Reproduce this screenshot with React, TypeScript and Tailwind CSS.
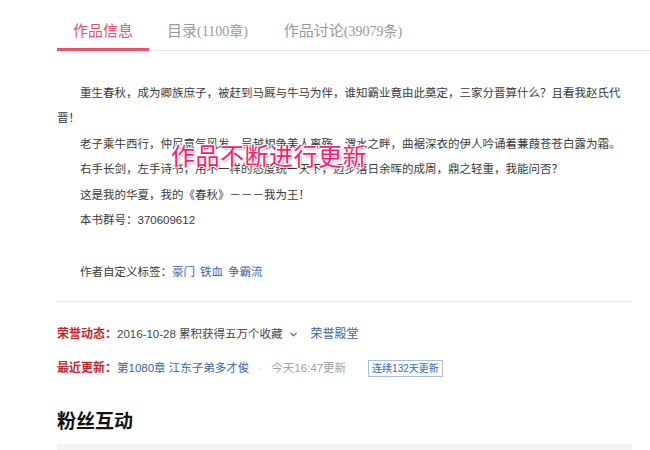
import { ChevronDown } from 'lucide-react';

const tabs = [
  { name: '作品信息', extra: '', active: true },
  { name: '目录', extra: '(1100章)', active: false },
  { name: '作品讨论', extra: '(39079条)', active: false },
];

const intro = [
  { text: '重生春秋，成为卿族庶子，被赶到马厩与牛马为伴，谁知霸业竟由此奠定，三家分晋算什么？且看我赵氏代晋！' },
  { text: '老子乘牛西行，仲尼意气风发，吴越相争美人离殇，渭水之畔，曲裾深衣的伊人吟诵着蒹葭苍苍白露为霜。' },
  { text: '右手长剑，左手诗书，用不一样的态度统一天下，迈步落日余晖的成周，鼎之轻重，我能问否？' },
  { text: '这是我的华夏，我的《春秋》－－－我为王！' },
  { text: '本书群号：370609612' },
];

const tags = ['豪门', '铁血', '争霸流'];

export default function App() {
  return (
    <main
      className="relative w-[650px] h-[450px] overflow-hidden bg-white text-[#333]"
      style={{ fontFamily: '"Liberation Sans", "Noto Sans CJK SC", sans-serif' }}
    >
      <div className="pl-[57px]">
        <div className="flex border-b border-[#e6e6e6]">
          {tabs.map((tab) => (
            <div
              key={tab.name}
              className={
                tab.active
                  ? 'flex items-baseline px-[16px] pt-[21px] pb-[6px] -mb-px border-b-[3px] border-[#ef506b] text-[#ef4f6a]'
                  : 'flex items-baseline px-[18px] pt-[21px] pb-[6px] -mb-px border-b-[3px] border-transparent text-[#999]'
              }
            >
              <span className="text-[15px] leading-[20px]">{tab.name}</span>
              {tab.extra && (
                <span
                  className="text-[14px] leading-[20px]"
                  style={{ fontFamily: '"Liberation Serif", "Noto Sans CJK SC", serif' }}
                >
                  {tab.extra}
                </span>
              )}
            </div>
          ))}
        </div>

        <div className="w-[572px] pt-[30px]">
          <div className="text-[11.5px] leading-[25.4px] text-[#3a3a3a]">
            {intro.map((p) => (
              <p key={p.text} className="indent-[23px]">
                {p.text}
              </p>
            ))}
          </div>

          <div className="mt-[27px] text-[11.5px] leading-[25px] text-[#3a3a3a] indent-[23px]">
            作者自定义标签：
            {tags.map((t) => (
              <span key={t} className="text-[#3d63a6] mr-[5px]">
                {t}
              </span>
            ))}
          </div>
        </div>

        <div className="w-[575px] mt-[16px] border-t border-[#e8e8e8]" />

        <div className="pt-[22px] text-[12px] leading-[20px]">
          <div className="flex items-center">
            <span className="font-bold text-[#c4262e]">荣誉动态：</span>
            <span className="text-[#444] text-[11.5px]">2016-10-28 累积获得五万个收藏</span>
            <ChevronDown className="ml-[5px] w-[11px] h-[11px] text-[#555]" strokeWidth={2.2} />
            <span className="ml-[12px] text-[#3d63a6]">荣誉殿堂</span>
          </div>
          <div className="flex items-center mt-[14px]">
            <span className="font-bold text-[#c4262e]">最近更新：</span>
            <span className="text-[#3d63a6] text-[11.5px]">第1080章 江东子弟多才俊</span>
            <span className="mx-[9px] text-[#ccc]">·</span>
            <span className="text-[#a0a0a0] text-[11.5px]">今天16:47更新</span>
            <span className="ml-[22px] px-[3px] border border-[#a9c1e0] text-[10px] leading-[15px] text-[#2f6bc4]">
              连续132天更新
            </span>
          </div>
        </div>

        <h2 className="mt-[31px] text-[19px] leading-[26px] font-bold text-[#111]">粉丝互动</h2>
        <div className="mt-[9px] w-[575px] h-[20px] bg-[#f5f4f2]" />
      </div>

      <div
        className="absolute left-[171px] top-[143px] text-[24px] leading-[28px] tracking-[0.5px] text-[#ff1a6e]"
        style={{
          textShadow: '1px 1px 0 #fff, -1px -1px 0 #fff, 1px -1px 0 #fff, -1px 1px 0 #fff, 2px 2px 2px rgba(0,0,0,0.25)',
        }}
      >
        作品不断进行更新
      </div>
    </main>
  );
}
